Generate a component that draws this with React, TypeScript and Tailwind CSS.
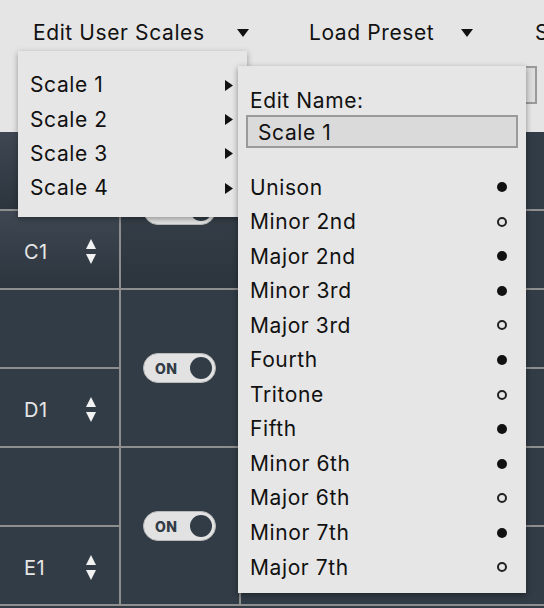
import React from 'react';

const intervals: [string, boolean][] = [
  ['Unison', true],
  ['Minor 2nd', false],
  ['Major 2nd', true],
  ['Minor 3rd', true],
  ['Major 3rd', false],
  ['Fourth', true],
  ['Tritone', false],
  ['Fifth', true],
  ['Minor 6th', true],
  ['Major 6th', false],
  ['Minor 7th', true],
  ['Major 7th', false],
];

const notes = ['C1', 'D1', 'E1'];

function DownCaret() {
  return (
    <svg width="12" height="8" viewBox="0 0 12 8" className="shrink-0">
      <path d="M0 0 L12 0 L6 8 Z" fill="#111" />
    </svg>
  );
}

function RightCaret() {
  return (
    <svg width="8" height="11" viewBox="0 0 8 11">
      <path d="M0 0 L8 5.5 L0 11 Z" fill="#111" />
    </svg>
  );
}

function Stepper() {
  return (
    <svg width="10" height="26" viewBox="0 0 10 26">
      <path d="M5 0 L10 10 L0 10 Z" fill="#f2f2f2" />
      <path d="M0 15 L10 15 L5 25 Z" fill="#f2f2f2" />
    </svg>
  );
}

function Toggle() {
  return (
    <div className="flex items-center justify-between w-[73px] h-[30px] rounded-full bg-[#e2e2e2] border border-[#b9b9b9] pl-[11px] pr-[3px]">
      <span className="text-[14px] font-extrabold text-[#323c46] tracking-[0.5px]">ON</span>
      <span className="w-[22px] h-[22px] rounded-full bg-[#323c46]" />
    </div>
  );
}

function Row({ note, first }: { note: string; first: boolean }) {
  const bg = first ? 'bg-gradient-to-b from-[#3f4852] to-[#2c353e]' : 'bg-[#323c46]';
  return (
    <div className="flex h-[158px] border-b-2 border-[#8e8e8e]">
      <div className="flex flex-col w-[121px] border-r-2 border-[#8e8e8e]">
        <div className={`h-[79px] border-b-2 border-[#8e8e8e] ${bg}`} />
        <div className={`flex-1 flex items-center justify-between pl-[24px] pr-[23px] pt-[4px] ${bg}`}>
          <span className="text-[20px] tracking-[0.5px] text-[#e6e6e6]">{note}</span>
          <Stepper />
        </div>
      </div>
      <div className={`flex items-center w-[120px] border-r-2 border-[#8e8e8e] pl-[22px] ${bg}`}>
        <Toggle />
      </div>
      <div className="flex-1 flex flex-col">
        <div className="h-[79px] border-b-2 border-[#8e8e8e]" />
        <div className="flex-1" />
      </div>
    </div>
  );
}

export default function App() {
  return (
    <div className="relative w-[544px] h-[608px] overflow-hidden bg-[#323c46] font-['Inter','Liberation_Sans',sans-serif] text-[#111] text-[21px] tracking-[0.6px]">
      {/* top bar */}
      <div className="h-[132px] bg-[#e5e5e5]">
        <div className="flex items-center h-[66px] whitespace-nowrap">
          <span className="shrink-0 pl-[33px] w-[237px]">Edit User Scales</span>
          <DownCaret />
          <span className="shrink-0 pl-[60px] w-[212px]">Load Preset</span>
          <DownCaret />
          <span className="shrink-0 pl-[62px]">Save</span>
        </div>
        <div className="flex justify-end pr-[7px]">
          <div className="w-[160px] h-[38px] border-2 border-[#9a9a9a] bg-[#dcdcdc]" />
        </div>
      </div>

      {/* grid */}
      <div>
        {notes.map((n, i) => (
          <Row key={n} note={n} first={i === 0} />
        ))}
      </div>

      {/* scale menu */}
      <div className="absolute left-[18px] top-[51px] w-[229px] h-[166px] bg-[#e6e6e6] shadow-[0_2px_6px_rgba(0,0,0,0.35)] pt-[17px]">
        {['Scale 1', 'Scale 2', 'Scale 3', 'Scale 4'].map((s) => (
          <div key={s} className="flex items-center justify-between h-[34.3px] pl-[12px] pr-[14px]">
            <span>{s}</span>
            <RightCaret />
          </div>
        ))}
      </div>

      {/* edit panel */}
      <div className="absolute left-[238px] top-[66px] w-[288px] h-[527px] bg-[#e6e6e6] shadow-[0_2px_6px_rgba(0,0,0,0.4)] px-[8px] pt-[22px]">
        <div className="pl-[4px] leading-[26px]">Edit Name:</div>
        <div className="mt-[1px] h-[33px] border-2 border-[#9a9a9a] bg-[#dadada] flex items-center pl-[10px] pt-[2px]">
          Scale 1
        </div>
        <div className="mt-[22px]">
          {intervals.map(([name, on]) => (
            <div key={name} className="flex items-center justify-between h-[34.55px] pl-[4px] pr-[11px]">
              <span>{name}</span>
              {on ? (
                <span className="w-[10px] h-[10px] rounded-full bg-[#111]" />
              ) : (
                <span className="w-[10px] h-[10px] rounded-full border-2 border-[#222]" />
              )}
            </div>
          ))}
        </div>
      </div>
    </div>
  );
}
